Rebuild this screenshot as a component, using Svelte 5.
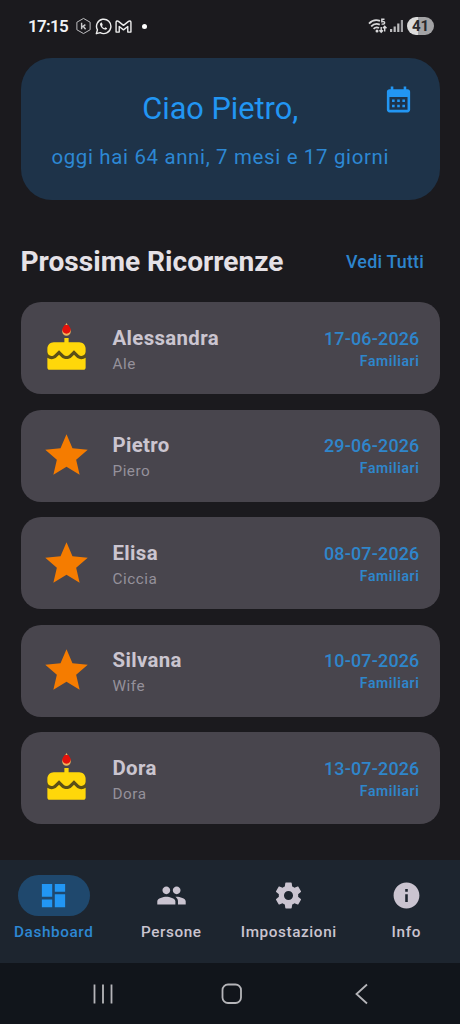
<script>
	const greeting = { name: 'Pietro', years: 64, months: 7, days: 17 };

	const events = [
		{ type: 'birthday', name: 'Alessandra', nick: 'Ale', date: '17-06-2026', group: 'Familiari' },
		{ type: 'star', name: 'Pietro', nick: 'Piero', date: '29-06-2026', group: 'Familiari' },
		{ type: 'star', name: 'Elisa', nick: 'Ciccia', date: '08-07-2026', group: 'Familiari' },
		{ type: 'star', name: 'Silvana', nick: 'Wife', date: '10-07-2026', group: 'Familiari' },
		{ type: 'birthday', name: 'Dora', nick: 'Dora', date: '13-07-2026', group: 'Familiari' }
	];

	const tabs = [
		{
			label: 'Dashboard',
			icon: 'M3 13h8V3H3v10zm0 8h8v-6H3v6zm10 0h8V11h-8v10zm0-18v6h8V3h-8z'
		},
		{
			label: 'Persone',
			icon: 'M16 11c1.66 0 2.99-1.34 2.99-3S17.66 5 16 5c-1.66 0-3 1.34-3 3s1.34 3 3 3zm-8 0c1.66 0 2.99-1.34 2.99-3S9.66 5 8 5C6.34 5 5 6.34 5 8s1.34 3 3 3zm0 2c-2.33 0-7 1.17-7 3.5V19h14v-2.5c0-2.33-4.67-3.5-7-3.5zm8 0c-.29 0-.62.02-.97.05 1.16.84 1.97 1.97 1.97 3.45V19h6v-2.5c0-2.33-4.67-3.5-7-3.5z'
		},
		{
			label: 'Impostazioni',
			icon: 'M12 15.5A3.5 3.5 0 0 1 8.5 12 3.5 3.5 0 0 1 12 8.5a3.5 3.5 0 0 1 3.5 3.5 3.5 3.5 0 0 1-3.5 3.5m7.43-2.53c.04-.32.07-.64.07-.97s-.03-.66-.07-1l2.11-1.63c.19-.15.24-.42.12-.64l-2-3.46c-.12-.22-.39-.31-.61-.22l-2.49 1c-.52-.39-1.06-.73-1.69-.98l-.37-2.65A.506.506 0 0 0 14 2h-4c-.25 0-.46.18-.5.42l-.37 2.65c-.63.25-1.17.59-1.69.98l-2.49-1c-.22-.09-.49 0-.61.22l-2 3.46c-.13.22-.07.49.12.64L4.57 11c-.04.34-.07.67-.07 1s.03.65.07.97l-2.11 1.66c-.19.15-.25.42-.12.64l2 3.46c.12.22.39.3.61.22l2.49-1.01c.52.4 1.06.74 1.69.99l.37 2.65c.04.24.25.42.5.42h4c.25 0 .46-.18.5-.42l.37-2.65c.63-.26 1.17-.59 1.69-.99l2.49 1.01c.22.08.49 0 .61-.22l2-3.46c.12-.22.07-.49-.12-.64z'
		},
		{
			label: 'Info',
			icon: 'M12 2C6.48 2 2 6.48 2 12s4.48 10 10 10 10-4.48 10-10S17.52 2 12 2zm1 15h-2v-6h2v6zm0-8h-2V7h2v2z'
		}
	];

	let active = $state('Dashboard');
</script>

<div class="screen">
	<header class="status">
		<span class="clock">17:15</span>
		<svg class="hex" viewBox="0 0 18 18" width="17" height="18">
			<path d="M9 1 16 5v8l-7 4-7-4V5z" fill="none" stroke="#c9c9cc" stroke-width="1" />
			<path d="M7 5.5v7M11 7.5 7.3 10.2M8.7 9.3l2.5 3.2" fill="none" stroke="#c9c9cc" stroke-width="1.5" />
		</svg>
		<svg class="whatsapp" viewBox="0 0 18 18" width="17" height="17">
			<path d="M1.4 16.6 2.6 12.6A7.6 7.6 0 1 1 5.5 15.5z" fill="none" stroke="#eee" stroke-width="1.5" stroke-linejoin="round" />
			<path d="M6.3 4.9c-.9.4-1.3 1.5-.8 2.8.8 2.1 2.5 3.9 4.8 4.6 1.3.4 2.4-.2 2.6-1.4l-1.9-1-1 1c-1.2-.5-2.1-1.4-2.6-2.5l.8-1-.8-2.2c-.3-.5-.7-.4-1.1-.3z" fill="#eee" />
		</svg>
		<svg class="gmail" viewBox="0 0 18 14" width="17" height="13">
			<path d="M1 13V2.5C1 1 2.5.6 3.6 1.5L9 5.8l5.4-4.3C15.5.6 17 1 17 2.5V13h-3.4V7L9 10.6 4.4 7v6z" fill="none" stroke="#eee" stroke-width="1.5" stroke-linejoin="round" />
		</svg>
		<span class="dot"></span>
		<span class="spacer"></span>
		<svg class="wifi" viewBox="0 0 20 16" width="20" height="16">
			<g fill="none" stroke="#d8d8da" stroke-width="1.8">
				<path d="M1 5.6C4.2 2.2 8.4 1.6 12 2.9" />
				<path d="M3.2 8.3c2.4-2.5 5.6-3 8.6-1.7" />
				<path d="M5.6 10.8c1.6-1.6 3.6-1.8 5.4-.8" />
			</g>
			<circle cx="9" cy="13" r="1.5" fill="#d8d8da" />
			<path d="M16.5 1.3h-2.7v2.4c2.5-.5 3 .4 2.8 1.3-.2 1.1-1.6 1.5-3 .8" fill="none" stroke="#d8d8da" stroke-width="1.4" />
			<path d="M13.2 9v5M11.4 12.2l1.8 2 1.8-2M16.7 13.5v-5M14.9 10.3l1.8-2 1.8 2" fill="none" stroke="#d8d8da" stroke-width="1.4" />
		</svg>
		<svg class="signal" viewBox="0 0 13 12" width="13" height="12">
			<path d="M0 9h2.2v3H0zM3.6 6.5h2.2V12H3.6zM7.2 3.5h2.2V12H7.2z" fill="#bcbcbe" />
			<path d="M10.8 0H13v12h-2.2z" fill="#a0a0a3" />
		</svg>
		<span class="battery">41</span>
	</header>

	<main>
		<section class="hero">
			<h1>Ciao {greeting.name},</h1>
			<p>oggi hai {greeting.years} anni, {greeting.months} mesi e {greeting.days} giorni</p>
			<svg class="calendar" viewBox="0 0 24 24">
				<path fill-rule="evenodd" d="M19 4h-1V2h-2v2H8V2H6v2H5c-1.11 0-1.99.9-1.99 2L3 20c0 1.1.89 2 2 2h14c1.1 0 2-.9 2-2V6c0-1.1-.9-2-2-2zm0 16H5V10h14v10zM9 14H7v-2h2v2zm4 0h-2v-2h2v2zm4 0h-2v-2h2v2zm-8 4H7v-2h2v2zm4 0h-2v-2h2v2zm4 0h-2v-2h2v2z" />
			</svg>
		</section>

		<div class="section-head">
			<h2>Prossime Ricorrenze</h2>
			<button class="see-all">Vedi Tutti</button>
		</div>

		<div class="list">
			{#each events as event}
				<article class="card">
					{#if event.type === 'birthday'}
						<svg class="event-icon" viewBox="0 0 24 24">
							<path fill="#5b4f17" d="M3 12.5h18v5H3z" />
							<path fill="#ffd70a" d="M16.6 15.99l-1.07-1.07-1.08 1.07c-1.3 1.3-3.58 1.31-4.89 0l-1.07-1.07-1.09 1.07C6.75 16.64 5.88 17 4.96 17c-.73 0-1.4-.23-1.96-.61V21c0 .55.45 1 1 1h16c.55 0 1-.45 1-1v-4.61c-.56.38-1.23.61-1.96.61-.92 0-1.79-.36-2.44-1.01zM18 9h-5V7h-2v2H6c-1.66 0-3 1.34-3 3v1.54c0 1.08.88 1.96 1.96 1.96.52 0 1.02-.2 1.38-.57l2.14-2.13 2.13 2.13c.74.74 2.03.74 2.77 0l2.14-2.13 2.13 2.13c.37.37.86.57 1.38.57 1.08 0 1.96-.88 1.96-1.96V12C21 10.34 19.66 9 18 9z" />
							<path fill="#f0b45c" d="M12 6c1.11 0 2-.9 2-2 0-.38-.1-.73-.29-1.03L12 0l-1.71 2.97c-.19.3-.29.65-.29 1.03 0 1.1.9 2 2 2z" />
							<path fill="#e3120b" d="M12 5c1.100 0 2-.8 2-1.9 0-.9-.7-1.400-1.100-2.200h-1.800c-.4.8-1.100 1.300-1.100 2.200C10 4.200 10.900 5 12 5z" />
						</svg>
					{:else}
						<svg class="event-icon" viewBox="0 0 24 24">
							<path fill="#f57c00" d="M12 17.27L18.18 21l-1.64-7.03L22 9.24l-7.19-.61L12 2 9.19 8.63 2 9.24l5.46 4.73L5.82 21z" />
						</svg>
					{/if}
					<div class="who">
						<strong>{event.name}</strong>
						<span>{event.nick}</span>
					</div>
					<div class="when">
						<time>{event.date}</time>
						<span>{event.group}</span>
					</div>
				</article>
			{/each}
		</div>
	</main>

	<nav class="tabs">
		{#each tabs as tab}
			<button class="tab" class:active={active === tab.label} onclick={() => (active = tab.label)}>
				<span class="pill">
					<svg viewBox="0 0 24 24"><path d={tab.icon} /></svg>
				</span>
				<span class="label">{tab.label}</span>
			</button>
		{/each}
	</nav>

	<footer class="system">
		<svg viewBox="0 0 22 22" width="22" height="22"><path d="M2.5 1.5v19M11 1.5v19M19.5 1.5v19" /></svg>
		<svg viewBox="0 0 22 22" width="22" height="22"><rect x="1.5" y="1.5" width="18.5" height="18.5" rx="5.5" /></svg>
		<svg viewBox="0 0 22 22" width="22" height="22"><path d="M17 1.5 6.5 11 17 20.5" /></svg>
	</footer>
</div>

<style>
	:global(body) {
		background: #1b1b1f;
	}

	.screen {
		width: 460px;
		height: 1024px;
		display: flex;
		flex-direction: column;
		overflow: hidden;
		background: #1b1a1e;
		font-family: Roboto, sans-serif;
	}

	h1, h2, p {
		margin: 0;
	}

	button {
		border: none;
		background: none;
		padding: 0;
		font-family: inherit;
		cursor: pointer;
	}

	.status {
		height: 58px;
		flex: none;
		box-sizing: border-box;
		padding: 0 26px 6px 28px;
		display: flex;
		align-items: center;
	}

	.clock {
		color: #f2f2f4;
		font-size: 17px;
		font-weight: 600;
		letter-spacing: -0.7px;
		width: 47px;
	}

	.whatsapp {
		margin: 0 3px 0 3px;
	}

	.dot {
		width: 5px;
		height: 5px;
		border-radius: 50%;
		background: #fff;
		margin-left: 10px;
	}

	.spacer {
		flex: 1;
	}

	.signal {
		margin: 0 4px 0 2px;
	}

	.battery {
		width: 27px;
		height: 18px;
		border-radius: 9px;
		background: linear-gradient(90deg, #dcdcdc 41%, #a3a3a5 41%);
		color: #29292c;
		font-size: 15px;
		font-weight: 700;
		line-height: 18px;
		text-align: center;
	}

	main {
		flex: 1;
		padding: 0 20px 0 20.5px;
	}

	.hero {
		position: relative;
		height: 142px;
		box-sizing: border-box;
		padding: 32px 20px 0 0;
		border-radius: 31px;
		background: #1e3349;
		color: #2296f3;
		text-align: center;
	}

	.hero h1 {
		font-size: 30.7px;
		font-weight: 400;
		line-height: 38px;
	}

	.hero p {
		margin-top: 17px;
		font-size: 20.4px;
		line-height: 25px;
		letter-spacing: 0.68px;
		color: #2d88d4;
	}

	.calendar {
		position: absolute;
		top: 26px;
		right: 26px;
		width: 31px;
		height: 31px;
		fill: #2296f3;
	}

	.section-head {
		display: flex;
		align-items: center;
		justify-content: space-between;
		height: 102.4px;
		padding: 21px 16px 0 0;
		box-sizing: border-box;
	}

	.section-head h2 {
		color: #e5e1e6;
		font-size: 28.1px;
		font-weight: 700;
	}

	.see-all {
		color: #2d84cc;
		font-size: 17.9px;
		font-weight: 500;
		letter-spacing: 0.2px;
	}

	.list {
		display: flex;
		flex-direction: column;
		gap: 15.5px;
	}

	.card {
		height: 92px;
		box-sizing: border-box;
		padding: 0 20.5px;
		display: flex;
		align-items: center;
		border-radius: 20px;
		background: #48454d;
	}

	.event-icon {
		width: 51px;
		height: 51px;
		flex: none;
	}

	.who, .when {
		display: flex;
		flex-direction: column;
	}

	.who {
		flex: 1;
		margin-left: 20.5px;
		padding-top: 4px;
	}

	.who strong {
		color: #cbc5d0;
		font-size: 20.4px;
		font-weight: 700;
		line-height: 27px;
		letter-spacing: 0.35px;
	}

	.who span {
		color: #95919b;
		font-size: 15.3px;
		line-height: 24px;
		letter-spacing: 0.5px;
	}

	.when {
		align-items: flex-end;
		padding-top: 1px;
		color: #2f86cb;
	}

	.when time {
		font-size: 17.9px;
		font-weight: 500;
		line-height: 25px;
		letter-spacing: 0.2px;
	}

	.when span {
		font-size: 14px;
		font-weight: 600;
		line-height: 21px;
		letter-spacing: 0.6px;
	}

	.tabs {
		height: 103px;
		flex: none;
		display: flex;
		gap: 10px;
		background: #1d252f;
	}

	.tab {
		flex: 1 1 0;
		min-width: 0;
		display: flex;
		flex-direction: column;
		align-items: center;
		padding-top: 15px;
		color: #cac4d0;
	}

	.pill {
		width: 72px;
		height: 41px;
		border-radius: 21px;
		display: flex;
		align-items: center;
		justify-content: center;
	}

	.pill svg {
		width: 31px;
		height: 31px;
		fill: currentColor;
	}

	.label {
		margin-top: 6px;
		font-size: 15.3px;
		font-weight: 500;
		line-height: 20px;
		letter-spacing: 0.6px;
	}

	.active {
		color: #2296f3;
	}

	.active .pill {
		background: #1f486d;
	}

	.active .label {
		color: #2d88d4;
	}

	.system {
		height: 61px;
		flex: none;
		box-sizing: border-box;
		padding: 1px 88px 0 92px;
		display: flex;
		align-items: center;
		justify-content: space-between;
		background: #11151b;
	}

	.system svg {
		fill: none;
		stroke: #b5b5b9;
		stroke-width: 1.8;
	}
</style>
